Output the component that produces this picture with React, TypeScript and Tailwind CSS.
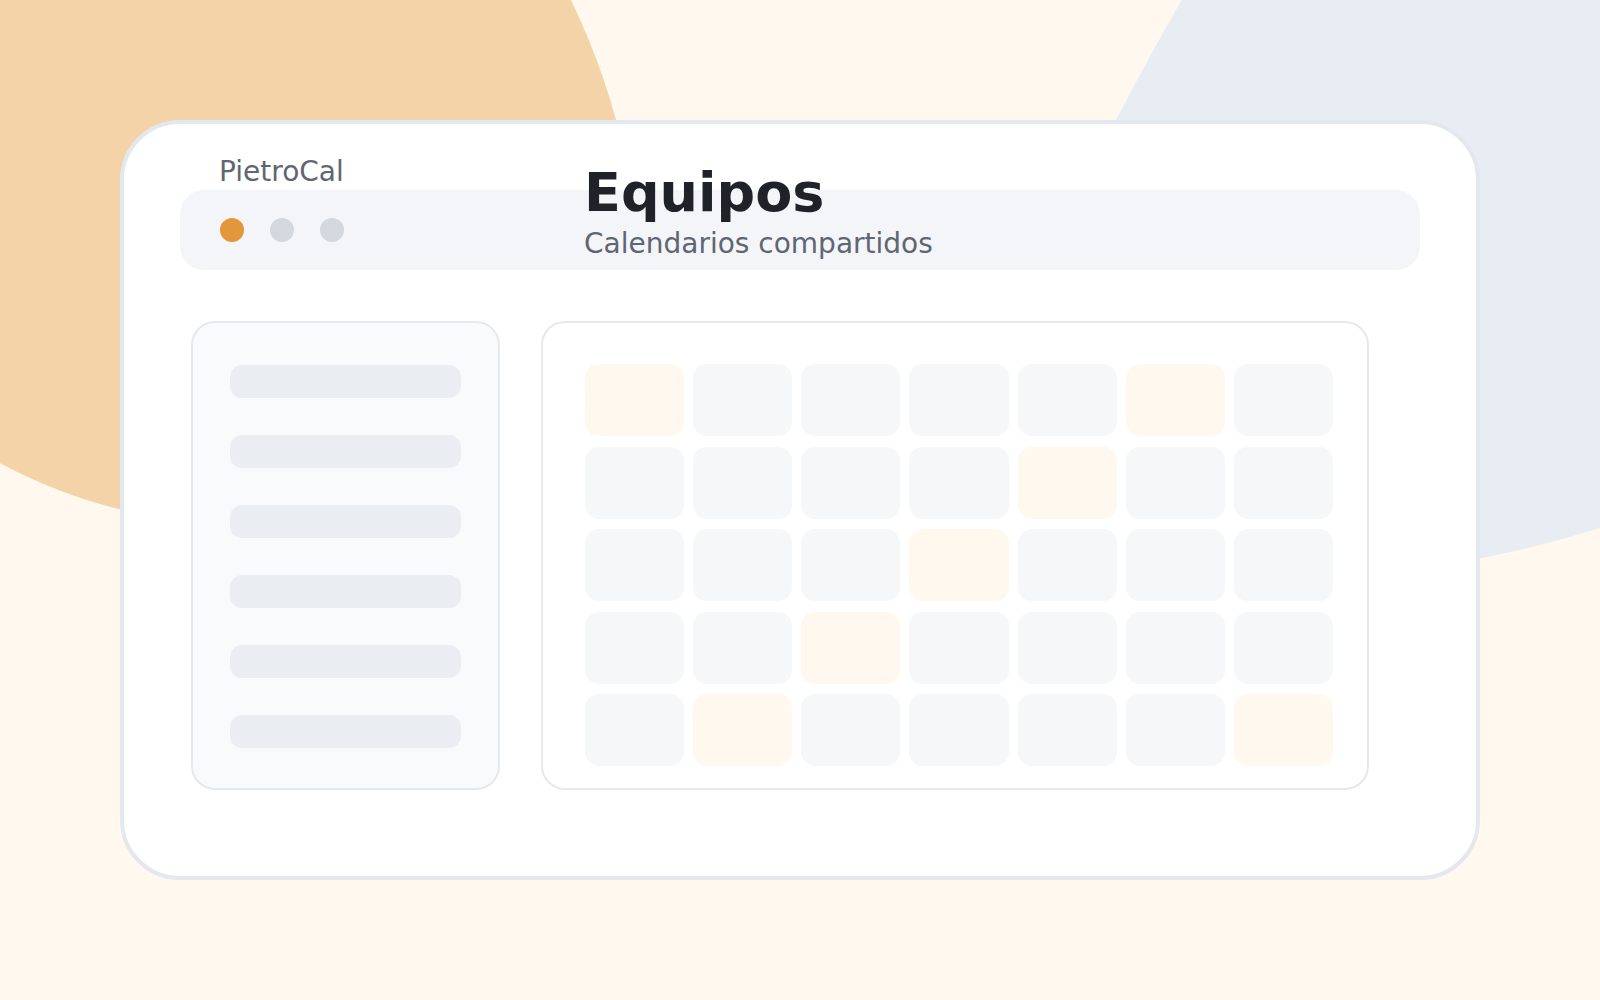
const highlighted = new Set(["0-0", "0-5", "1-4", "2-3", "3-2", "4-1", "4-6"]);

function Backdrop() {
  return (
    <svg className="absolute inset-0" width="1600" height="1000" viewBox="0 0 1600 1000">
      <path
        d="M0 0 L571 0 Q609.5 80 625.3 160 L400 500 L160 516.9 Q80 505.6 0 463.3 Z"
        fill="#f5d3a8"
      />
      <path
        d="M1181.7 0 L1600 0 L1600 528 Q1520 553.2 1440 564.9 L1200 400 L1095.6 160 Q1135.6 80 1181.7 0 Z"
        fill="#e8ecf3"
      />
    </svg>
  );
}

function Sidebar() {
  return (
    <div className="flex h-[469px] w-[309px] flex-col gap-[37px] rounded-3xl border-2 border-[#e5e8ec] bg-[#f9fafc] pl-[37px] pt-[42px]">
      {[0, 1, 2, 3, 4, 5].map((i) => (
        <div key={i} className="h-[33px] w-[231px] rounded-xl bg-[#eaeef3]" />
      ))}
    </div>
  );
}

function Calendar() {
  const rows = [0, 1, 2, 3, 4];
  const cols = [0, 1, 2, 3, 4, 5, 6];
  return (
    <div className="h-[469px] w-[828px] rounded-3xl border-2 border-[#e5e8ec] bg-white pl-[42px] pt-[41px]">
      <div className="grid w-[748px] grid-cols-7 gap-x-[9px] gap-y-[10.5px]">
        {rows.map((r) =>
          cols.map((c) => (
            <div
              key={`${r}-${c}`}
              className={
                highlighted.has(`${r}-${c}`)
                  ? "h-[72px] rounded-[14px] bg-[#fff8ee]"
                  : "h-[72px] rounded-[14px] bg-[#f6f7f9]"
              }
            />
          ))
        )}
      </div>
    </div>
  );
}

export default function App() {
  return (
    <div className="relative h-[1000px] w-full overflow-hidden bg-[#fff8ef] font-['DejaVu_Sans',sans-serif]">
      <Backdrop />

      <div className="relative ml-[120px] mt-[120px] h-[760px] w-[1360px] rounded-[60px] border-4 border-[#e3e8ef] bg-white px-[56px] pt-[34px]">
        <div className="ml-[39px] text-[28px] leading-[28px] text-[#5f6672]">PietroCal</div>

        <div className="mt-[4px] flex h-[80px] items-center gap-[26px] rounded-3xl bg-[#f3f5f8] pl-[40px]">
          <span className="h-6 w-6 rounded-full bg-[#e3963a]" />
          <span className="h-6 w-6 rounded-full bg-[#d3d7de]" />
          <span className="h-6 w-6 rounded-full bg-[#d3d7de]" />
        </div>

        <div className="absolute left-[460px] top-[42px]">
          <h1 className="text-[54px] font-bold leading-[54px] text-[#1f2228]">Equipos</h1>
          <p className="mt-[10px] text-[28px] leading-[28px] text-[#5f6672]">Calendarios compartidos</p>
        </div>

        <div className="mt-[51px] flex gap-[41px] pl-[11px]">
          <Sidebar />
          <Calendar />
        </div>
      </div>
    </div>
  );
}
